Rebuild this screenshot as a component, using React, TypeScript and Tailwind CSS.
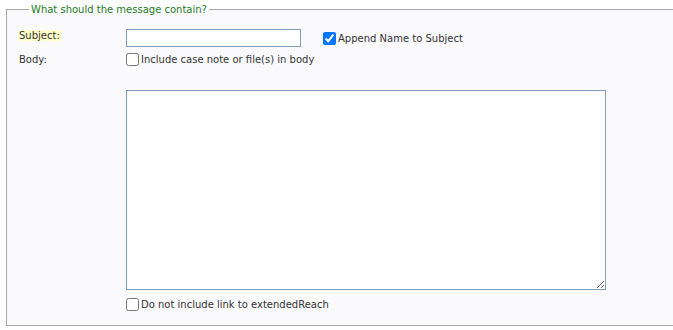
export default function App() {
  return (
    <div className="h-[330px] w-[673px] overflow-hidden bg-white pt-[3px] font-['DejaVu_Sans',sans-serif] text-[10px] text-[#333]">
      <fieldset className="ml-[6px] h-[323px] w-[700px] border border-[#a8a8a8] bg-[#fafafd] pl-[12px] pt-[13px]">
        <legend className="ml-[10px] px-[2px] leading-[13px] text-[#1f7a1f]">
          What should the message contain?
        </legend>

        <div className="flex h-[18px] items-center">
          <span className="w-[107px] shrink-0 self-start pt-[1px] leading-[12px]">
            <span className="bg-[#ffffc8] pr-[1px]">Subject:</span>
          </span>
          <input
            type="text"
            className="h-[18px] w-[175px] border border-[#7e9fbe] bg-white"
          />
          <label className="ml-[22px] flex items-center gap-[2px]">
            <input type="checkbox" defaultChecked className="h-[13px] w-[13px]" />
            Append Name to Subject
          </label>
        </div>

        <div className="mt-[5px] flex h-[14px] items-center">
          <span className="w-[107px] shrink-0">Body:</span>
          <label className="flex items-center gap-[2px]">
            <input type="checkbox" className="h-[13px] w-[13px]" />
            Include case note or file(s) in body
          </label>
        </div>

        <div className="ml-[107px] mt-[24px] flex flex-col">
          <textarea className="block h-[200px] w-[480px] border border-[#7e9fbe] bg-white" />
          <label className="mt-[7px] flex items-center gap-[2px]">
            <input type="checkbox" className="h-[13px] w-[13px]" />
            Do not include link to extendedReach
          </label>
        </div>
      </fieldset>
    </div>
  );
}
